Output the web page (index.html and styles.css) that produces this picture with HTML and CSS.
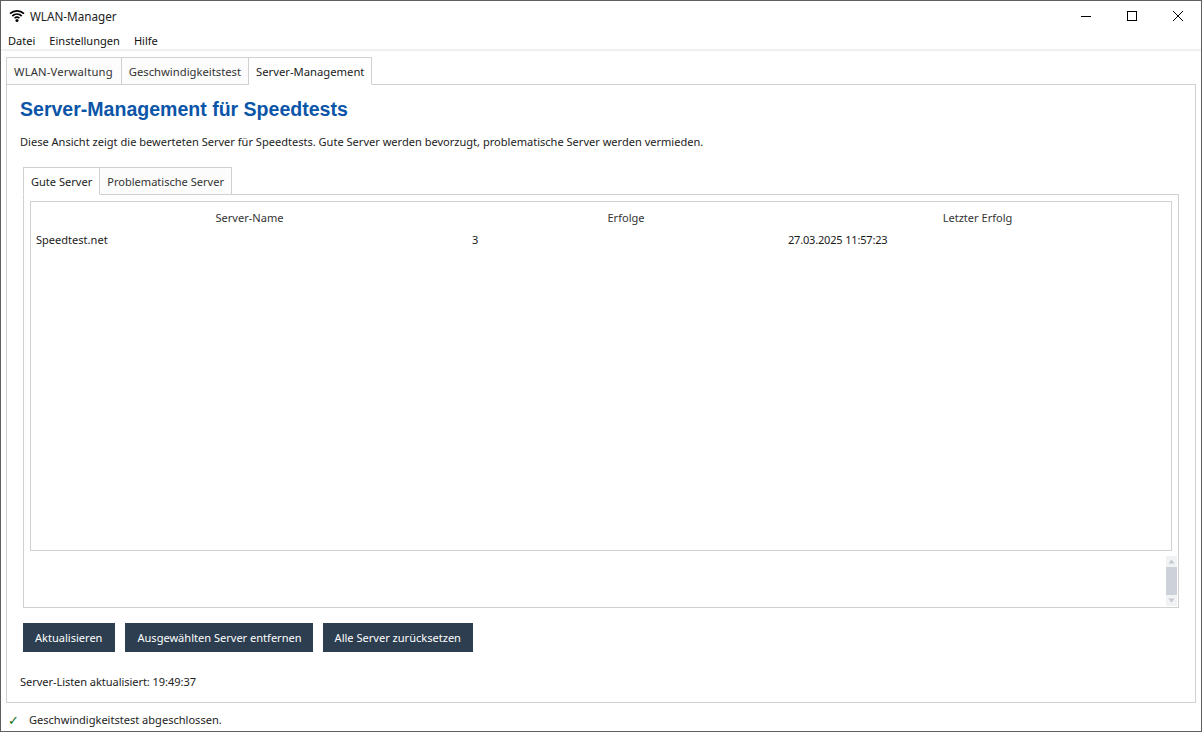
FILE: index.html
```html
<!DOCTYPE html>
<html lang="de">
<head>
<meta charset="utf-8">
<title>WLAN-Manager</title>
<link rel="stylesheet" href="styles.css">
</head>
<body>
<div class="window">
  <header class="titlebar">
    <svg class="app-icon" width="16" height="14" viewBox="0 0 16 14" aria-hidden="true">
      <path d="M1 4.6C5 .9 11 .9 15 4.6M3.3 7C6.1 4.5 9.9 4.5 12.7 7M5.600 9.2C7 8 9 8 10.400 9.2" fill="none" stroke="#000" stroke-width="1.7"/>
      <circle cx="8" cy="11.6" r="1.5" fill="#000"/>
    </svg>
    <span class="app-title">WLAN-Manager</span>
    <div class="win-controls">
      <svg class="win-btn" width="46" height="30" viewBox="0 0 46 30" aria-hidden="true"><path d="M18 15.5h10" stroke="#000" fill="none"/></svg>
      <svg class="win-btn" width="46" height="30" viewBox="0 0 46 30" aria-hidden="true"><rect x="18.5" y="10.500" width="9" height="9" stroke="#000" fill="none"/></svg>
      <svg class="win-btn" width="46" height="30" viewBox="0 0 46 30" aria-hidden="true"><path d="M18 10l10 10M28 10L18 20" stroke="#000" fill="none"/></svg>
    </div>
  </header>
  <nav class="menubar">
    <span class="menu-item">Datei</span>
    <span class="menu-item">Einstellungen</span>
    <span class="menu-item">Hilfe</span>
  </nav>
  <main class="main">
    <div class="tabs outer-tabs">
      <div class="tab tab-wide">WLAN-Verwaltung</div>
      <div class="tab">Geschwindigkeitstest</div>
      <div class="tab tab-active">Server-Management</div>
    </div>
    <section class="pane">
      <h1 class="heading">Server-Management für Speedtests</h1>
      <p class="intro">Diese Ansicht zeigt die bewerteten Server für Speedtests. Gute Server werden bevorzugt, problematische Server werden vermieden.</p>
      <div class="tabs inner-tabs">
        <div class="tab tab-active">Gute Server</div>
        <div class="tab">Problematische Server</div>
      </div>
      <div class="inner-pane">
        <div class="table">
          <div class="row row-head">
            <div class="cell">Server-Name</div>
            <div class="cell">Erfolge</div>
            <div class="cell">Letzter Erfolg</div>
          </div>
          <div class="row">
            <div class="cell">Speedtest.net</div>
            <div class="cell">3</div>
            <div class="cell cell-date">27.03.2025 11:57:23</div>
          </div>
        </div>
        <div class="scroll-zone">
          <div class="scrollbar">
            <svg class="sb-arrow" width="11" height="11" viewBox="0 0 11 11" aria-hidden="true"><path d="M5.500 3.500L2.500 7.500h6z" fill="#c4c8cf"/></svg>
            <div class="sb-thumb"></div>
            <svg class="sb-arrow" width="11" height="11" viewBox="0 0 11 11" aria-hidden="true"><path d="M5.500 7.500L2.500 3.500h6z" fill="#c4c8cf"/></svg>
          </div>
        </div>
      </div>
      <div class="actions">
        <button class="btn btn-first" type="button">Aktualisieren</button>
        <button class="btn btn-second" type="button">Ausgewählten Server entfernen</button>
        <button class="btn" type="button">Alle Server zurücksetzen</button>
      </div>
      <div class="updated">Server-Listen aktualisiert: 19:49:37</div>
    </section>
  </main>
  <footer class="statusbar">
    <span class="check">✓</span>
    <span>Geschwindigkeitstest abgeschlossen.</span>
  </footer>
</div>
</body>
</html>
```
FILE: styles.css
```css
* { box-sizing: border-box; }
html, body { margin: 0; height: 100%; }
body {
  font-family: "Noto Sans", "Open Sans", sans-serif;
  font-size: 11.05px;
  color: #1a1a1a;
  background: #fff;
  overflow: hidden;
}
.window {
  width: 1202px;
  height: 732px;
  border: 1px solid #5f5f5f;
  display: flex;
  flex-direction: column;
  background: #fff;
}
.titlebar {
  height: 29px;
  display: flex;
  align-items: center;
  padding-left: 8px;
  flex: none;
}
.app-icon { margin-right: 5px; }
.app-title { font-size: 11.7px; color: #222; padding-top: 1px; }
.win-controls { margin-left: auto; display: flex; }
.win-btn { display: block; }
.menubar {
  height: 21px;
  flex: none;
  display: flex;
  gap: 14px;
  align-items: center;
  padding-left: 7px;
  padding-top: 1px;
  border-bottom: 2px solid #f0f0f0;
}
.menu-item { color: #111; }
.main {
  flex: none;
  display: flex;
  flex-direction: column;
  padding: 6px 5px 0;
  background: #fff;
}
.tabs { display: flex; flex: none; position: relative; z-index: 1; margin-bottom: -1px; }
.outer-tabs { font-size: 11.25px; }
.tab {
  height: 28px;
  display: flex;
  align-items: center;
  padding: 0 7px;
  border: 1px solid #d0d0d0;
  border-left-width: 0;
  background: #fcfcfc;
  color: #333;
}
.tab:first-child { border-left-width: 1px; }
.tab-wide { letter-spacing: .17px; padding-right: 8px; }
.tab-active { background: #fff; border-bottom-color: #fff; color: #222; }
.pane {
  flex: none;
  height: 619px;
  border: 1px solid #d0d0d0;
  background: #fff;
  padding: 0 16px 0 13px;
  display: flex;
  flex-direction: column;
}
.heading {
  margin: 11px 0 0;
  font-family: "Liberation Sans", Arial, sans-serif;
  font-size: 19.55px;
  line-height: 26px;
  font-weight: 700;
  color: #0b55a8;
}
.intro { margin: 12px 0 0; line-height: 16px; color: #222; }
.inner-tabs { margin-top: 17px; margin-left: 3px; }
.inner-pane {
  height: 414px;
  flex: none;
  margin-left: 3px;
  border: 1px solid #d0d0d0;
  padding: 6px 6px 0 6px;
  display: flex;
  flex-direction: column;
}
.table {
  height: 350px;
  flex: none;
  border: 1px solid #d0d0d0;
}
.row {
  display: grid;
  grid-template-columns: 437px 316px 1fr;
  height: 22px;
  align-items: center;
}
.row-head { margin-top: 4px; text-align: center; color: #333; }
.row:not(.row-head) .cell { padding-left: 4px; }
.row:not(.row-head) .cell:first-child { padding-left: 5px; }
.row .cell-date { letter-spacing: -.2px; }
.scroll-zone { flex: 1; display: flex; justify-content: flex-end; align-items: flex-start; padding-top: 5px; margin-right: -5px; }
.scrollbar {
  width: 11px;
  height: 50px;
  background: #f1f2f3;
  display: flex;
  flex-direction: column;
}
.sb-arrow { flex: none; display: block; }
.sb-thumb { flex: 1; background: #cdd1d9; }
.actions { display: flex; gap: 10px; margin-top: 15px; margin-left: 3px; }
.btn {
  height: 29px;
  padding: 0 12px;
  border: 0;
  background: #2c3e50;
  color: #fff;
  font: inherit;
}
.btn-first { padding-right: 13px; }
.btn-second { padding-right: 11px; }
.updated { margin-top: 22px; line-height: 16px; color: #222; letter-spacing: -.06px; }
.statusbar {
  flex: 1;
  display: flex;
  align-items: center;
  padding: 5px 0 0 7px;
  gap: 10px;
  color: #222;
}
.check { color: #157015; font-size: 13px; }
```
